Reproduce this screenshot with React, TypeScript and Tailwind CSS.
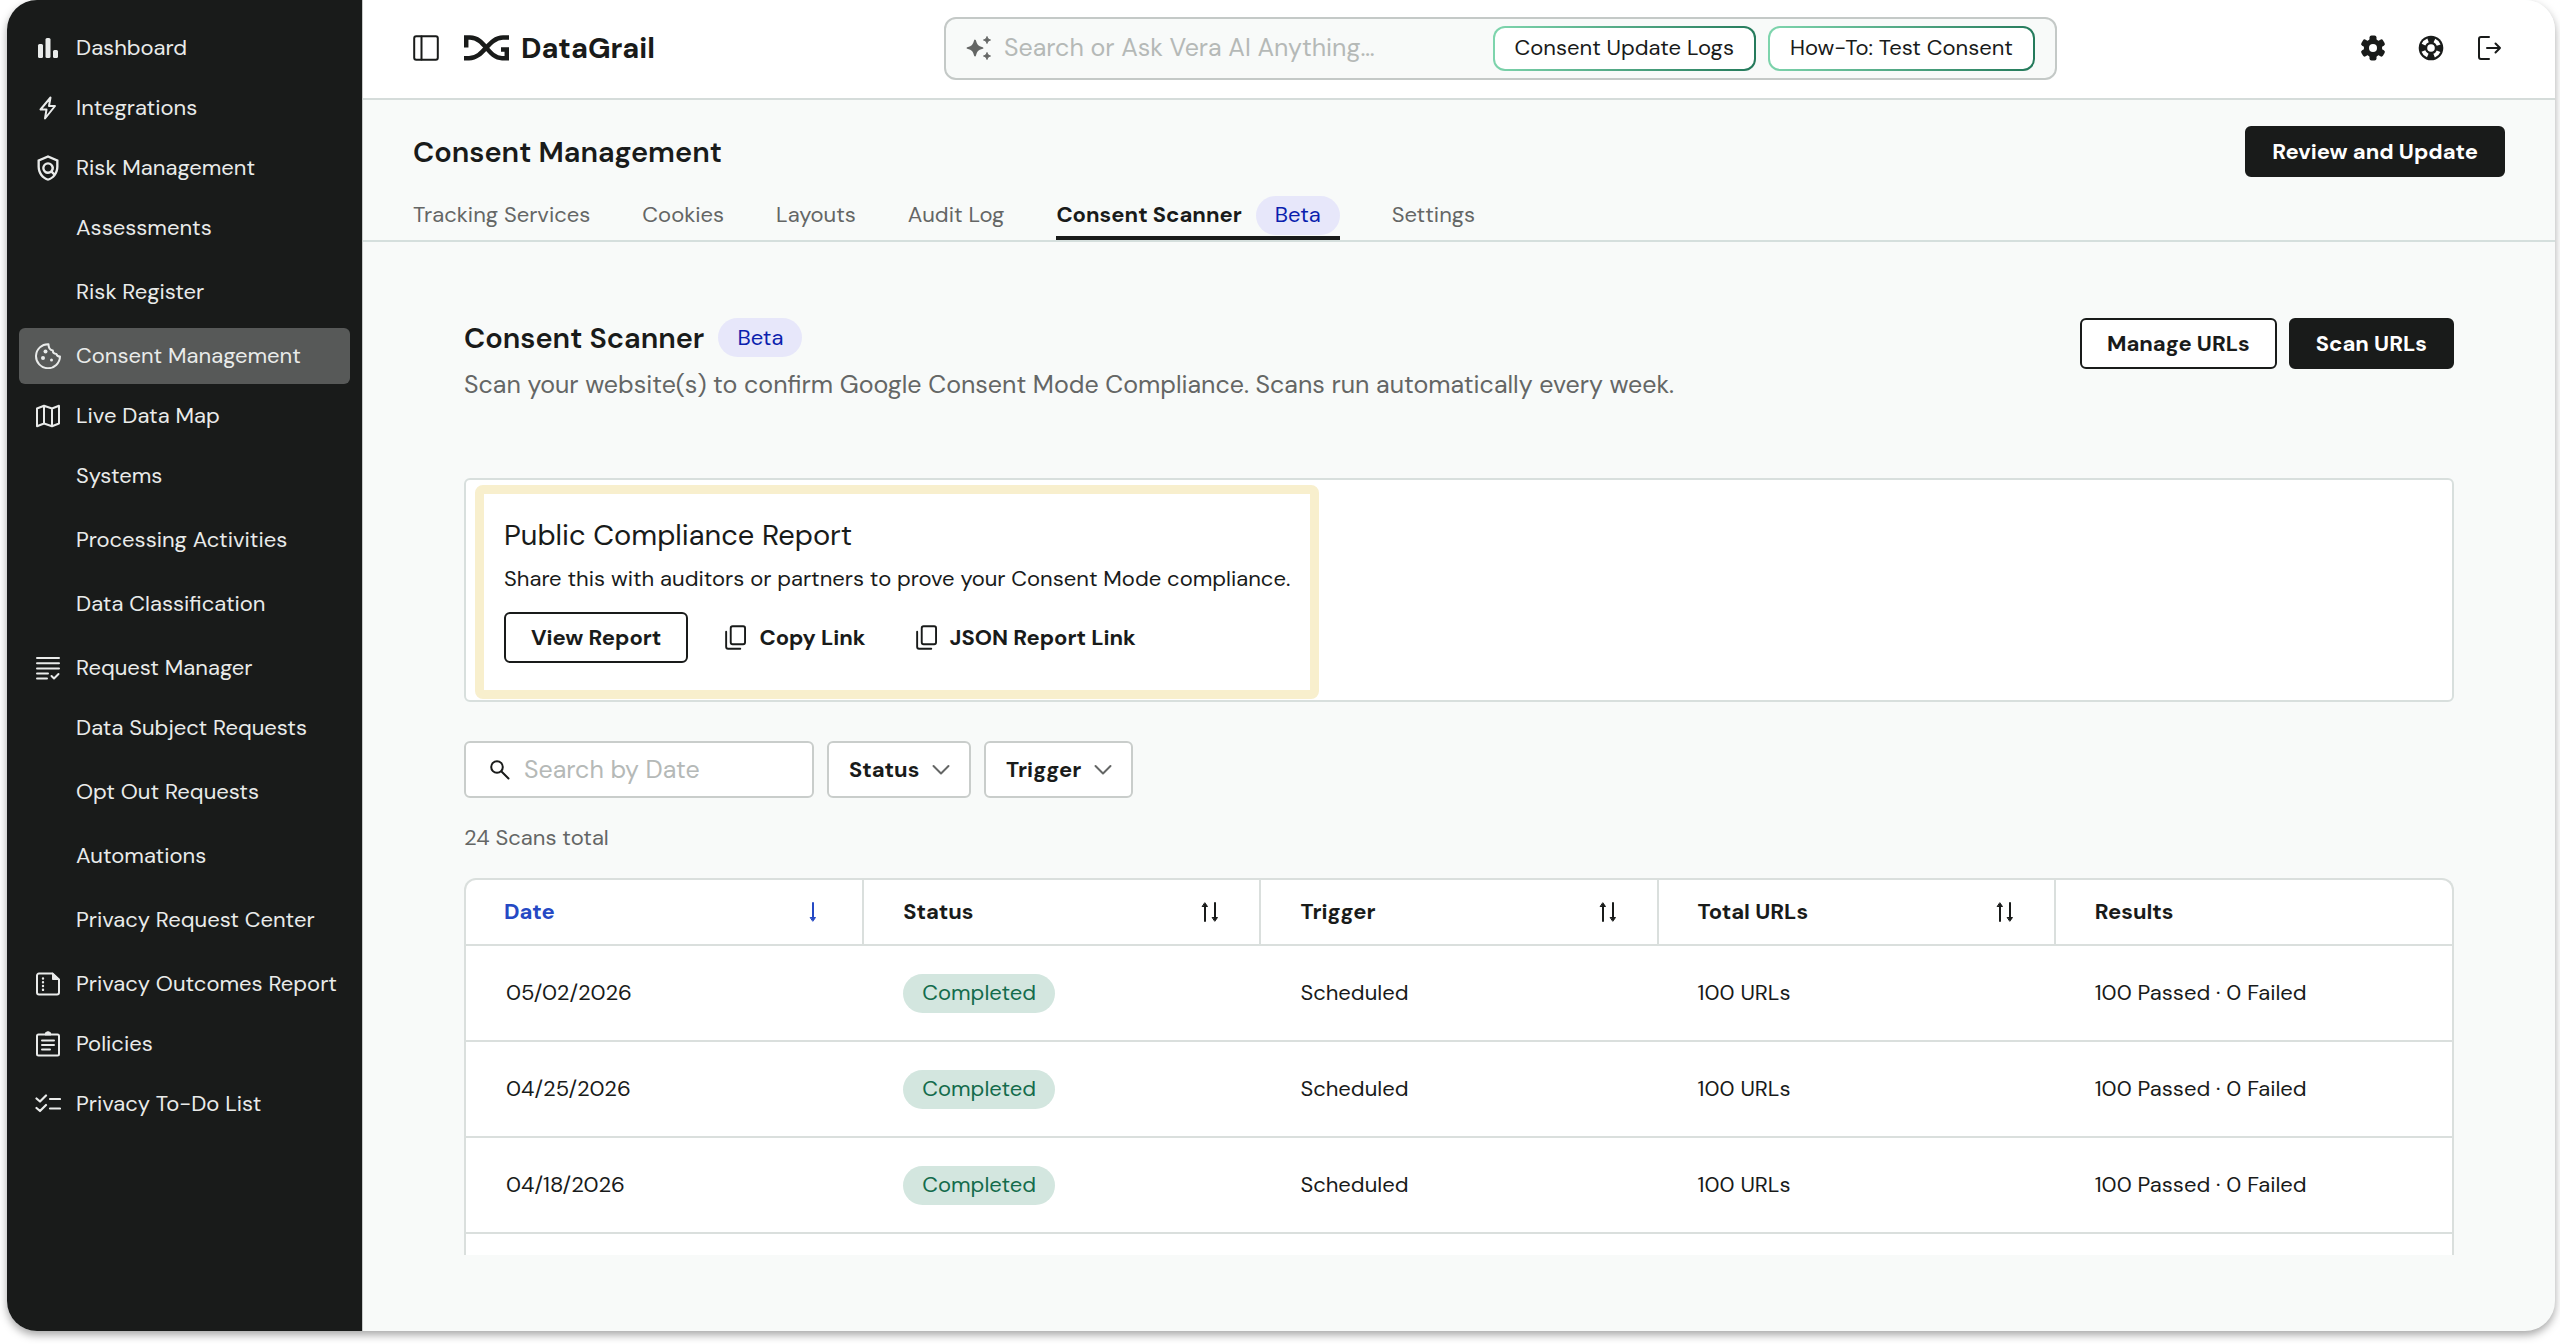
import { useState } from 'react';
import type { ReactNode } from 'react';
import clsx from 'clsx';
import { MdOutlinePolicy } from 'react-icons/md';

type NavItem = {
  label: string;
  icon?: ReactNode;
  active?: boolean;
};

const NAV: NavItem[] = [
  { label: 'Dashboard', icon: <BarsIcon /> },
  { label: 'Integrations', icon: <BoltIcon /> },
  { label: 'Risk Management', icon: <MdOutlinePolicy className="size-7 shrink-0 -mx-px" /> },
  { label: 'Assessments' },
  { label: 'Risk Register' },
  { label: 'Consent Management', icon: <CookieIcon />, active: true },
  { label: 'Live Data Map', icon: <MapIcon /> },
  { label: 'Systems' },
  { label: 'Processing Activities' },
  { label: 'Data Classification' },
  { label: 'Request Manager', icon: <RequestsIcon /> },
  { label: 'Data Subject Requests' },
  { label: 'Opt Out Requests' },
  { label: 'Automations' },
  { label: 'Privacy Request Center' },
  { label: 'Privacy Outcomes Report', icon: <ReportIcon /> },
  { label: 'Policies', icon: <ClipboardIcon /> },
  { label: 'Privacy To-Do List', icon: <ChecklistIcon /> },
];

const TABS = [
  { label: 'Tracking Services' },
  { label: 'Cookies' },
  { label: 'Layouts' },
  { label: 'Audit Log' },
  { label: 'Consent Scanner', beta: true },
  { label: 'Settings' },
];

const COLUMNS = ['Date', 'Status', 'Trigger', 'Total URLs', 'Results'];

const SCANS = [
  { date: '05/02/2026', status: 'Completed', trigger: 'Scheduled', urls: 100, passed: 100, failed: 0 },
  { date: '04/25/2026', status: 'Completed', trigger: 'Scheduled', urls: 100, passed: 100, failed: 0 },
  { date: '04/18/2026', status: 'Completed', trigger: 'Scheduled', urls: 100, passed: 100, failed: 0 },
];

export default function App() {
  return (
    <div className="h-screen bg-white pl-[7px] pr-[5px] pb-[13px] font-['DM_Sans',Inter,sans-serif] text-[22px] leading-8 text-[#191b1a]">
      <div className="flex h-full overflow-hidden rounded-[30px] bg-[#f8faf9] shadow-[0_4px_8px_rgba(0,0,0,0.35)]">
        <Sidebar />
        <div className="flex min-w-0 flex-1 flex-col border-l border-[#c9cccb]">
          <TopBar />
          <PageHeader />
          <main className="flex min-h-0 flex-1 flex-col px-[101px] pt-[76px] pb-[76px]">
            <ScannerIntro />
            <ComplianceReport />
            <Filters />
            <p className="mt-6 mb-6 text-[#646665]">24 Scans total</p>
            <ScanTable />
          </main>
        </div>
      </div>
    </div>
  );
}

function Sidebar() {
  return (
    <nav className="flex w-[355px] shrink-0 flex-col gap-1 bg-[#191b1a] px-3 pt-5 text-[#e9ebea]">
      {NAV.map((item) => (
        <a
          key={item.label}
          href="#"
          className={clsx(
            'flex h-14 shrink-0 items-center gap-[15px] rounded-md px-4 whitespace-nowrap',
            item.active && 'bg-[#575958]',
            !item.icon && 'mb-1 pl-[57px]',
          )}
        >
          {item.icon}
          {item.label}
        </a>
      ))}
    </nav>
  );
}

function TopBar() {
  return (
    <header className="flex h-[100px] shrink-0 items-center border-b-2 border-[#d5dcda] bg-white px-[50px] pb-[2px]">
      <div className="flex w-[531px] shrink-0 items-center">
        <button type="button" aria-label="Toggle sidebar">
          <PanelIcon />
        </button>
        <a href="#" className="ml-[25px] flex items-center gap-3 text-[29px] font-bold">
          <Logo />
          DataGrail
        </a>
      </div>
      <div className="flex h-[63px] min-w-0 flex-1 items-center gap-3 rounded-xl border-2 border-[#c4c9c7] bg-[#f8faf9] px-5">
        <SparkleIcon />
        <input
          type="text"
          aria-label="Search or Ask Vera AI"
          placeholder="Search or Ask Vera AI Anything…"
          className="min-w-0 flex-1 bg-transparent text-[25px] outline-none placeholder:text-[#b5b9b7]"
        />
        <Suggestion>Consent Update Logs</Suggestion>
        <Suggestion>How-To: Test Consent</Suggestion>
      </div>
      <div className="flex w-[448px] shrink-0 items-center justify-end gap-8 pr-[3px]">
        <button type="button" aria-label="Settings">
          <GearIcon />
        </button>
        <button type="button" aria-label="Help">
          <BuoyIcon />
        </button>
        <button type="button" aria-label="Log out">
          <LogoutIcon />
        </button>
      </div>
    </header>
  );
}

function Suggestion({ children }: { children: ReactNode }) {
  return (
    <button
      type="button"
      className="h-[45px] shrink-0 rounded-xl border-2 border-transparent px-5 whitespace-nowrap [background:linear-gradient(#fff,#fff)_padding-box,linear-gradient(100deg,#7fd6ae,#23795a)_border-box]"
    >
      {children}
    </button>
  );
}

function PageHeader() {
  return (
    <section className="shrink-0 border-b-2 border-[#d5dfdd] px-[50px] pt-[26px]">
      <div className="flex items-center justify-between">
        <h1 className="text-[29px] font-semibold">Consent Management</h1>
        <Button solid>Review and Update</Button>
      </div>
      <div role="tablist" className="mt-[17px] flex h-[46px] gap-[52px]">
        {TABS.map((tab) => (
          <button
            key={tab.label}
            type="button"
            role="tab"
            aria-selected={!!tab.beta}
            className={clsx(
              'flex items-center gap-[14px] border-b-4 whitespace-nowrap',
              tab.beta ? 'border-[#191b1a] font-bold' : 'border-transparent text-[#646665]',
            )}
          >
            {tab.label}
            {tab.beta && <Beta />}
          </button>
        ))}
      </div>
    </section>
  );
}

function Beta() {
  return (
    <span className="flex h-[39px] items-center rounded-full bg-[#e7e7fa] px-[19px] text-[22px] font-normal text-[#0b1fae]">
      Beta
    </span>
  );
}

function Button({ solid, children }: { solid?: boolean; children: ReactNode }) {
  return (
    <button
      type="button"
      className={clsx(
        'h-[51px] rounded-md border-2 border-[#191b1a] px-[25px] font-bold whitespace-nowrap',
        solid ? 'bg-[#191b1a] text-white' : 'bg-white',
      )}
    >
      {children}
    </button>
  );
}

function ScannerIntro() {
  return (
    <div className="flex items-start justify-between">
      <div>
        <div className="flex items-center gap-[14px]">
          <h2 className="text-[29px] font-semibold">Consent Scanner</h2>
          <Beta />
        </div>
        <p className="mt-3 text-[25px] text-[#646665]">
          Scan your website(s) to confirm Google Consent Mode Compliance. Scans run automatically
          every week.
        </p>
      </div>
      <div className="flex gap-3">
        <Button>Manage URLs</Button>
        <Button solid>Scan URLs</Button>
      </div>
    </div>
  );
}

function ComplianceReport() {
  return (
    <section className="mt-[77px] rounded-md border-2 border-[#d8dfdd] bg-white px-[9px] pt-[5px] pb-px">
      <div className="w-fit rounded-lg border-[9px] border-[#f8efcd] pt-[25px] pr-5 pb-[27px] pl-5">
        <h3 className="text-[29px]">Public Compliance Report</h3>
        <p className="mt-3">Share this with auditors or partners to prove your Consent Mode compliance.</p>
        <div className="mt-[17px] flex items-center">
          <Button>View Report</Button>
          <button type="button" className="ml-[37px] flex items-center gap-[13px] font-bold">
            <CopyIcon />
            Copy Link
          </button>
          <button type="button" className="ml-[50px] flex items-center gap-[13px] font-bold">
            <CopyIcon />
            JSON Report Link
          </button>
        </div>
      </div>
    </section>
  );
}

function Filters() {
  const [query, setQuery] = useState('');

  return (
    <div className="mt-[39px] flex gap-[13px]">
      <label className="flex h-[57px] w-[350px] items-center gap-3 rounded-md border-2 border-[#c9cdcb] bg-white px-[22px]">
        <SearchIcon />
        <input
          type="text"
          aria-label="Search by Date"
          placeholder="Search by Date"
          value={query}
          onChange={(e) => setQuery(e.target.value)}
          className="min-w-0 flex-1 text-[25px] outline-none placeholder:text-[#b5b9b7]"
        />
      </label>
      <FilterSelect label="Status" options={['Completed', 'Failed']} className="w-[144px]" />
      <FilterSelect label="Trigger" options={['Scheduled', 'Manual']} className="w-[149px]" />
    </div>
  );
}

type FilterSelectProps = {
  label: string;
  options: string[];
  className: string;
};

function FilterSelect({ label, options, className }: FilterSelectProps) {
  return (
    <div className={clsx('relative', className)}>
      <select
        aria-label={label}
        className="h-[57px] w-full appearance-none rounded-md border-2 border-[#c9cdcb] bg-white pl-5 font-bold"
      >
        <option>{label}</option>
        {options.map((option) => (
          <option key={option}>{option}</option>
        ))}
      </select>
      <svg
        viewBox="0 0 18 12"
        className="pointer-events-none absolute top-[23px] right-[21px] h-3 w-[18px] fill-none stroke-[#646665] stroke-2"
      >
        <path d="M1.5 2 9 9.5 16.5 2" strokeLinecap="round" strokeLinejoin="round" />
      </svg>
    </div>
  );
}

function ScanTable() {
  return (
    <div className="min-h-0 flex-1 overflow-hidden rounded-t-xl border-2 border-b-0 border-[#dadfdd] bg-white">
      <table className="w-full table-fixed border-collapse text-left">
        <thead>
          <tr className="h-[65px] border-b-2 border-[#dadfdd]">
            {COLUMNS.map((column, i) => (
              <th
                key={column}
                className="border-l-2 border-[#dadfdd] pr-9 pl-[39px] font-bold first:border-l-0 first:pl-[38px]"
              >
                <span className={clsx('flex items-center justify-between', i === 0 && 'text-[#2549c4]')}>
                  {column}
                  {i < COLUMNS.length - 1 && <SortIcon single={i === 0} />}
                </span>
              </th>
            ))}
          </tr>
        </thead>
        <tbody>
          {SCANS.map((scan) => (
            <tr key={scan.date} className="h-24 border-b-2 border-[#dadfdd]">
              <td className="pl-10">{scan.date}</td>
              <td className="pl-10">
                <span className="inline-flex h-[39px] items-center rounded-full bg-[#d3e6df] px-[19px] text-[#146c4c]">
                  {scan.status}
                </span>
              </td>
              <td className="pl-10">{scan.trigger}</td>
              <td className="pl-10">{scan.urls} URLs</td>
              <td className="pl-10">
                {scan.passed} Passed · {scan.failed} Failed
              </td>
            </tr>
          ))}
        </tbody>
      </table>
    </div>
  );
}

/* Icons */

function Icon({ children }: { children: ReactNode }) {
  return (
    <svg
      viewBox="0 0 26 26"
      className="size-[26px] shrink-0"
      fill="none"
      stroke="currentColor"
      strokeWidth="2"
      strokeLinecap="round"
      strokeLinejoin="round"
    >
      {children}
    </svg>
  );
}

function BarsIcon() {
  return (
    <Icon>
      <g fill="currentColor" stroke="none">
        <rect x="3" y="9" width="5" height="14" rx="1.5" />
        <rect x="10.5" y="3" width="5" height="20" rx="1.5" />
        <rect x="18" y="15" width="5" height="8" rx="1.5" />
      </g>
    </Icon>
  );
}

function BoltIcon() {
  return (
    <Icon>
      <path d="M15.5 2.5 5.5 14.5h6l-1.5 9 10-12.5h-6z" />
    </Icon>
  );
}

function CookieIcon() {
  return (
    <Icon>
      <path d="M13.5 1.2A12 12 0 1 0 25 13.5c-1.8 0-3.2-.9-3.6-2.6-2.2 0-3.6-1.3-3.6-3.4-2.6-.4-4.3-2.8-4.3-6.3z" />
      <g fill="currentColor" stroke="none">
        <circle cx="10.5" cy="8.5" r="2" />
        <circle cx="8" cy="15" r="2" />
        <circle cx="16.5" cy="17" r="1.5" />
      </g>
    </Icon>
  );
}

function MapIcon() {
  return (
    <Icon>
      <path d="M2 5.5 9 2.8l8 2.7 7-2.7v17.700l-7 2.700-8-2.700-7 2.700zM9 2.800v17.700M17 5.500v17.700" />
    </Icon>
  );
}

function RequestsIcon() {
  return (
    <Icon>
      <path d="M2 3h22M2 8.200h22M2 13.400h22M2 18.600h11M2 23.500h10M16.500 21l2.500 2.500 4.500-4.500" />
    </Icon>
  );
}

function ReportIcon() {
  return (
    <Icon>
      <path d="M17.500 2.500H4a2 2 0 0 0-2 2v17a2 2 0 0 0 2 2h18a2 2 0 0 0 2-2V8.500z" />
      <path d="M17.500 2.500v6H24z" fill="currentColor" strokeWidth="1" />
      <path d="M8 7.500v.1M8 11.200v.1M8 15v.1M8 18.800v.1" strokeWidth="2.400" />
    </Icon>
  );
}

function ClipboardIcon() {
  return (
    <Icon>
      <rect x="2" y="3.500" width="22" height="21" rx="1.500" />
      <path d="M7 9.500h12M7 14h12M7 18.500h8" />
      <path d="M10 3.500a3 2.800 0 0 1 6 0z" fill="currentColor" strokeWidth="1" />
    </Icon>
  );
}

function ChecklistIcon() {
  return (
    <Icon>
      <path d="M1.500 7.500 5 10.500l6-6M1.500 17l3.500 3 6-6M15 8h10M15 17.500h10" strokeWidth="2.200" />
    </Icon>
  );
}

function PanelIcon() {
  return (
    <Icon>
      <rect x="1.200" y="1.200" width="23.600" height="23.600" rx="2" />
      <path d="M8.500 1.500v23" />
    </Icon>
  );
}

function Logo() {
  return (
    <svg viewBox="0 0 45 26" className="h-[26px] w-[45px]" fill="none" stroke="currentColor" strokeWidth="4.500">
      <path d="M2.200 12.500V2.600H6C21 2.600 24 23.200 38 23.200h4.800V14.500H37" />
      <path d="M0 23.200h5C20 23.200 24 2.600 39 2.600h6" />
    </svg>
  );
}

function SparkleIcon() {
  return (
    <svg
      viewBox="0 0 26 26"
      className="size-[26px] shrink-0 fill-[#646665] stroke-[#646665]"
      strokeLinejoin="round"
    >
      <path
        d="M9 5.500c1.300 5 2.500 6.200 7.500 7.500-5 1.300-6.200 2.500-7.500 7.500-1.300-5-2.500-6.200-7.500-7.500C6.500 11.700 7.700 10.500 9 5.500z"
        strokeWidth="1.800"
      />
      <path
        d="M21 1.500c.6 2.200 1.300 2.900 3.500 3.500-2.200.6-2.900 1.300-3.500 3.500-.6-2.200-1.300-2.900-3.500-3.500 2.200-.6 2.900-1.300 3.500-3.500zM21 17.500c.6 2.200 1.300 2.900 3.500 3.500-2.200.6-2.900 1.300-3.500 3.500-.6-2.200-1.300-2.900-3.500-3.500 2.200-.6 2.900-1.300 3.500-3.500z"
        strokeWidth="1"
      />
    </svg>
  );
}

function GearIcon() {
  return (
    <svg viewBox="0 0 26 26" className="size-[26px]" fill="currentColor">
      <rect x="9.500" y=".5" width="7" height="25" rx="2" />
      <rect x="9.500" y=".5" width="7" height="25" rx="2" transform="rotate(60 13 13)" />
      <rect x="9.500" y=".5" width="7" height="25" rx="2" transform="rotate(120 13 13)" />
      <circle cx="13" cy="13" r="9.200" />
      <circle cx="13" cy="13" r="4" fill="#fff" />
    </svg>
  );
}

function BuoyIcon() {
  return (
    <svg viewBox="0 0 26 26" className="size-[26px]">
      <circle cx="13" cy="13" r="12.300" fill="currentColor" />
      <circle
        cx="13"
        cy="13"
        r="8.200"
        fill="none"
        stroke="#fff"
        strokeWidth="4"
        strokeDasharray="6.400 6.480"
        strokeDashoffset="-3.240"
      />
      <circle cx="13" cy="13" r="3.800" fill="#fff" />
    </svg>
  );
}

function LogoutIcon() {
  return (
    <Icon>
      <path d="M13 2H5a2 2 0 0 0-2 2v18a2 2 0 0 0 2 2h8M11 13h13M19.500 8.500 24 13l-4.500 4.500" />
    </Icon>
  );
}

function CopyIcon() {
  return (
    <svg
      viewBox="0 0 22 26"
      className="h-[25px] w-[21px]"
      fill="none"
      stroke="currentColor"
      strokeWidth="2"
      strokeLinecap="round"
    >
      <rect x="6" y="1.200" width="15" height="18.800" rx="2" />
      <path d="M1.200 7v15.800a2 2 0 0 0 2 2H16" />
    </svg>
  );
}

function SearchIcon() {
  return (
    <svg
      viewBox="0 0 24 24"
      className="size-6 shrink-0"
      fill="none"
      stroke="currentColor"
      strokeWidth="2"
      strokeLinecap="round"
    >
      <circle cx="9" cy="9" r="5.800" />
      <path d="m13.500 13.500 7 7" />
    </svg>
  );
}

function SortIcon({ single }: { single?: boolean }) {
  return (
    <Icon>
      {single ? (
        <>
          <path d="M13 4v16" />
          <path d="M10.500 18.500h5L13 22z" fill="currentColor" strokeWidth="1" />
        </>
      ) : (
        <>
          <path d="M8 6v16M18 4v16" />
          <path d="M5.500 7.500h5L8 4zM15.500 18.500h5L18 22z" fill="currentColor" strokeWidth="1" />
        </>
      )}
    </Icon>
  );
}
